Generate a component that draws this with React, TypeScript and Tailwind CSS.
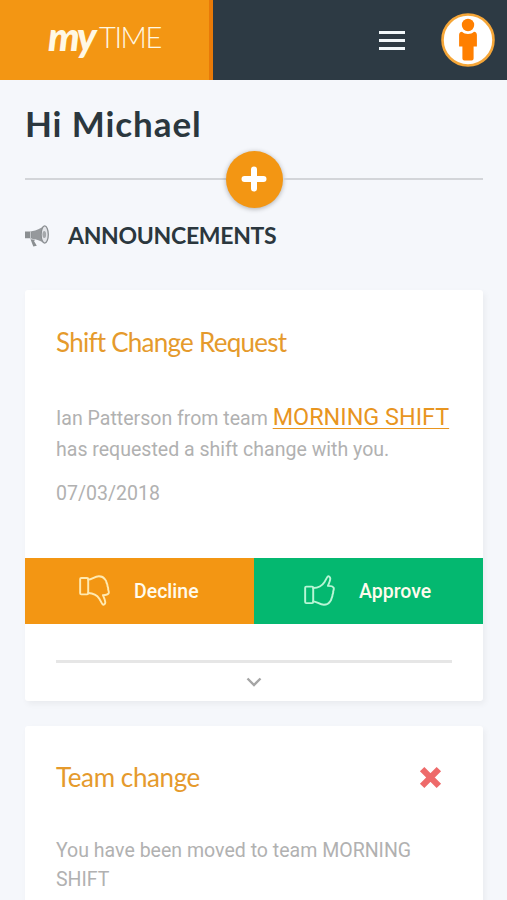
import * as React from "react";

const ThumbIcon = ({ className }: { className: string }) => (
  <svg viewBox="0 0 32 32" fill="none" stroke="currentColor" strokeWidth="2" strokeLinejoin="round" strokeLinecap="round" className={className}>
    <rect x="1.200" y="12" width="8.300" height="17" rx="1.200" />
    <path d="M9.500 13.500C14 13.400 18.500 11.500 21 7.500C22.200 5.500 23 3.500 24.300 1.800C25.500 .8 27.300 2 27.100 4.100C26.900 6.700 25.600 9 24.700 11.200C27 11.200 29.800 11.600 30.600 13.200C31.100 14.500 30.500 15.800 30.100 17C30.400 18.400 29.800 19.500 29.400 20.600C29.500 22 28.800 23 28.400 24.100C28.400 25.800 27.500 26.700 26.700 27.600C25.400 29.800 23.300 30.700 20.600 30.700C16 30.600 13.500 27.500 9.500 27.200" />
  </svg>
);

const BullhornIcon = () => (
  <svg viewBox="0 0 24 22" className="h-[22px] w-6">
    <path fill="#8b8f92" d="M0 6.500H7V13.300H0ZM5.500 14.200L10.300 14.800L9 15.900L11.800 20.800L8.300 21.500Z" />
    <path fill="#96999c" d="M6.500 6.200C12 5.500 15 3.500 19.300 .8V18.200C15 15.800 12 14.300 6.500 13.800Z" />
    <ellipse cx="19.700" cy="9.500" rx="3.600" ry="8.600" fill="#e4e6ea" stroke="#8b8f92" strokeWidth="1.300" />
    <ellipse cx="19.300" cy="9.500" rx="1.800" ry="3.500" fill="#a5a8ab" />
    <path d="M5.500 6V14" stroke="#c6c9cc" />
  </svg>
);

const PersonIcon = () => (
  <svg viewBox="0 0 54 54" className="h-[54px] w-[54px]">
    <circle cx="27" cy="27" r="25.500" fill="#fff" stroke="#f5a638" strokeWidth="2.600" />
    <g fill="#ff7f00">
      <circle cx="27" cy="12" r="6.200" />
      <path d="M21 18.800C24 21.700 30 21.700 33 18.800C35 19 35.900 20.200 35.900 22V33.500H32.600V45.500Q32.600 47.500 30.600 47.500H23.400Q21.400 47.500 21.400 45.500V33.500H18.100V22C18.100 20.200 19 19 21 18.800Z" />
    </g>
  </svg>
);

const Header = () => (
  <header className="flex h-20 bg-[#2d3a44]">
    <div className="flex h-20 w-[213px] shrink-0 items-start border-r-4 border-[#e87a08] bg-[#f39613] pl-12 pt-[18px] text-[#fff8e4]">
      <span className="w-[51px] whitespace-nowrap text-[40px] font-black italic leading-[37px] tracking-[-2.5px]">my</span>
      <span className="whitespace-nowrap text-[29px] font-light leading-[38px] tracking-[-1.4px]">TIME</span>
    </div>
    <div className="flex flex-1 items-center justify-end gap-9 pr-3">
      <button className="flex w-[26px] flex-col gap-[5px]">
        <span className="h-[3px] w-full bg-[#f2f8fb]"></span>
        <span className="h-[3px] w-full bg-[#f2f8fb]"></span>
        <span className="h-[3px] w-full bg-[#f2f8fb]"></span>
      </button>
      <PersonIcon />
    </div>
  </header>
);

const Card = ({ className, children }: { className: string; children: React.ReactNode }) => (
  <section className={`rounded-[3px] bg-white shadow-[2px_3px_6px_rgba(0,0,0,0.05)] ${className}`}>{children}</section>
);

export default function App() {
  return (
    <div className="h-[900px] w-[507px] overflow-hidden bg-[#f5f7fb] font-['Lato',sans-serif]">
      <Header />
      <main className="pl-[25px] pr-6">
        <h1 className="h-[71px] whitespace-nowrap pt-[23px] text-[35px] font-bold leading-[40px] tracking-[0.9px] text-[#2b373e]">Hi Michael</h1>
        <div className="flex h-14 items-center">
          <span className="h-0.5 flex-1 bg-[#d3d5d9]"></span>
          <button className="flex h-[57px] w-[57px] items-center justify-center rounded-full bg-[#f39613] shadow-[0_1px_5px_rgba(0,0,0,0.3)]">
            <svg viewBox="0 0 26 26" className="h-[26px] w-[26px]">
              <path d="M13 3.500V22.500M3.500 13H22.500" stroke="#fff" strokeWidth="6" strokeLinecap="round" />
            </svg>
          </button>
          <span className="h-0.5 flex-1 bg-[#d3d5d9]"></span>
        </div>
        <div className="flex h-[83px] items-start gap-[19px] pt-[13px]">
          <div className="pt-[5px]">
            <BullhornIcon />
          </div>
          <h2 className="whitespace-nowrap text-[23px] font-bold leading-[30px] tracking-[-0.3px] text-[#2b373e]">ANNOUNCEMENTS</h2>
        </div>

        <Card className="h-[411px]">
          <div className="h-[268px] px-[31px] pt-[34px]">
            <h3 className="whitespace-nowrap text-[26px] leading-[36px] tracking-[-0.75px] text-[#e59a2c]">Shift Change Request</h3>
            <div className="whitespace-nowrap pt-[42px] font-['Roboto',sans-serif] text-[19.550px] leading-[30px] text-[#b1b1b1]">
              <p className="h-[33px]">
                Ian Patterson from team <a className="text-[23.400px] text-[#e8951f] underline decoration-1 underline-offset-[3px]">MORNING SHIFT</a>
              </p>
              <p>has requested a shift change with you.</p>
              <p className="pt-[14px]">07/03/2018</p>
            </div>
          </div>
          <div className="flex h-[66px] font-['Roboto',sans-serif] text-[19.500px] font-medium text-[#fffbed]">
            <button className="flex w-1/2 items-center bg-[#f39613] pl-[54px]">
              <ThumbIcon className="-mt-0.5 h-[31px] w-[31px] -scale-y-100 text-[#ffe9b0]" />
              <span className="pl-6 pt-0.5">Decline</span>
            </button>
            <button className="flex w-1/2 items-center bg-[#04b870] pl-[50px]">
              <ThumbIcon className="-mt-px h-[31px] w-[31px] text-[#b9f5d5]" />
              <span className="pl-6 pt-0.5">Approve</span>
            </button>
          </div>
          <div className="px-[31px] pt-9">
            <div className="h-[3px] bg-[#e6e6e6]"></div>
            <svg viewBox="0 0 16 10" className="mx-auto mt-[14px] h-[10px] w-4">
              <path d="M1.500 1.500L8 8L14.500 1.500" fill="none" stroke="#a5a5a5" strokeWidth="2.400" />
            </svg>
          </div>
        </Card>

        <Card className="mt-[25px] h-[220px] px-[31px] pt-[33px]">
          <div className="flex items-center justify-between pr-[10px]">
            <h3 className="whitespace-nowrap text-[26px] leading-[36px] tracking-[-0.4px] text-[#e59a2c]">Team change</h3>
            <svg viewBox="0 0 22 22" className="h-[23px] w-[23px]">
              <path d="M3 3L19 19M19 3L3 19" stroke="#ee6a6a" strokeWidth="6" />
            </svg>
          </div>
          <p className="whitespace-nowrap pt-[41px] font-['Roboto',sans-serif] text-[19.550px] leading-[29px] text-[#b1b1b1]">
            You have been moved to team MORNING
            <br />
            SHIFT
          </p>
        </Card>
      </main>
    </div>
  );
}
